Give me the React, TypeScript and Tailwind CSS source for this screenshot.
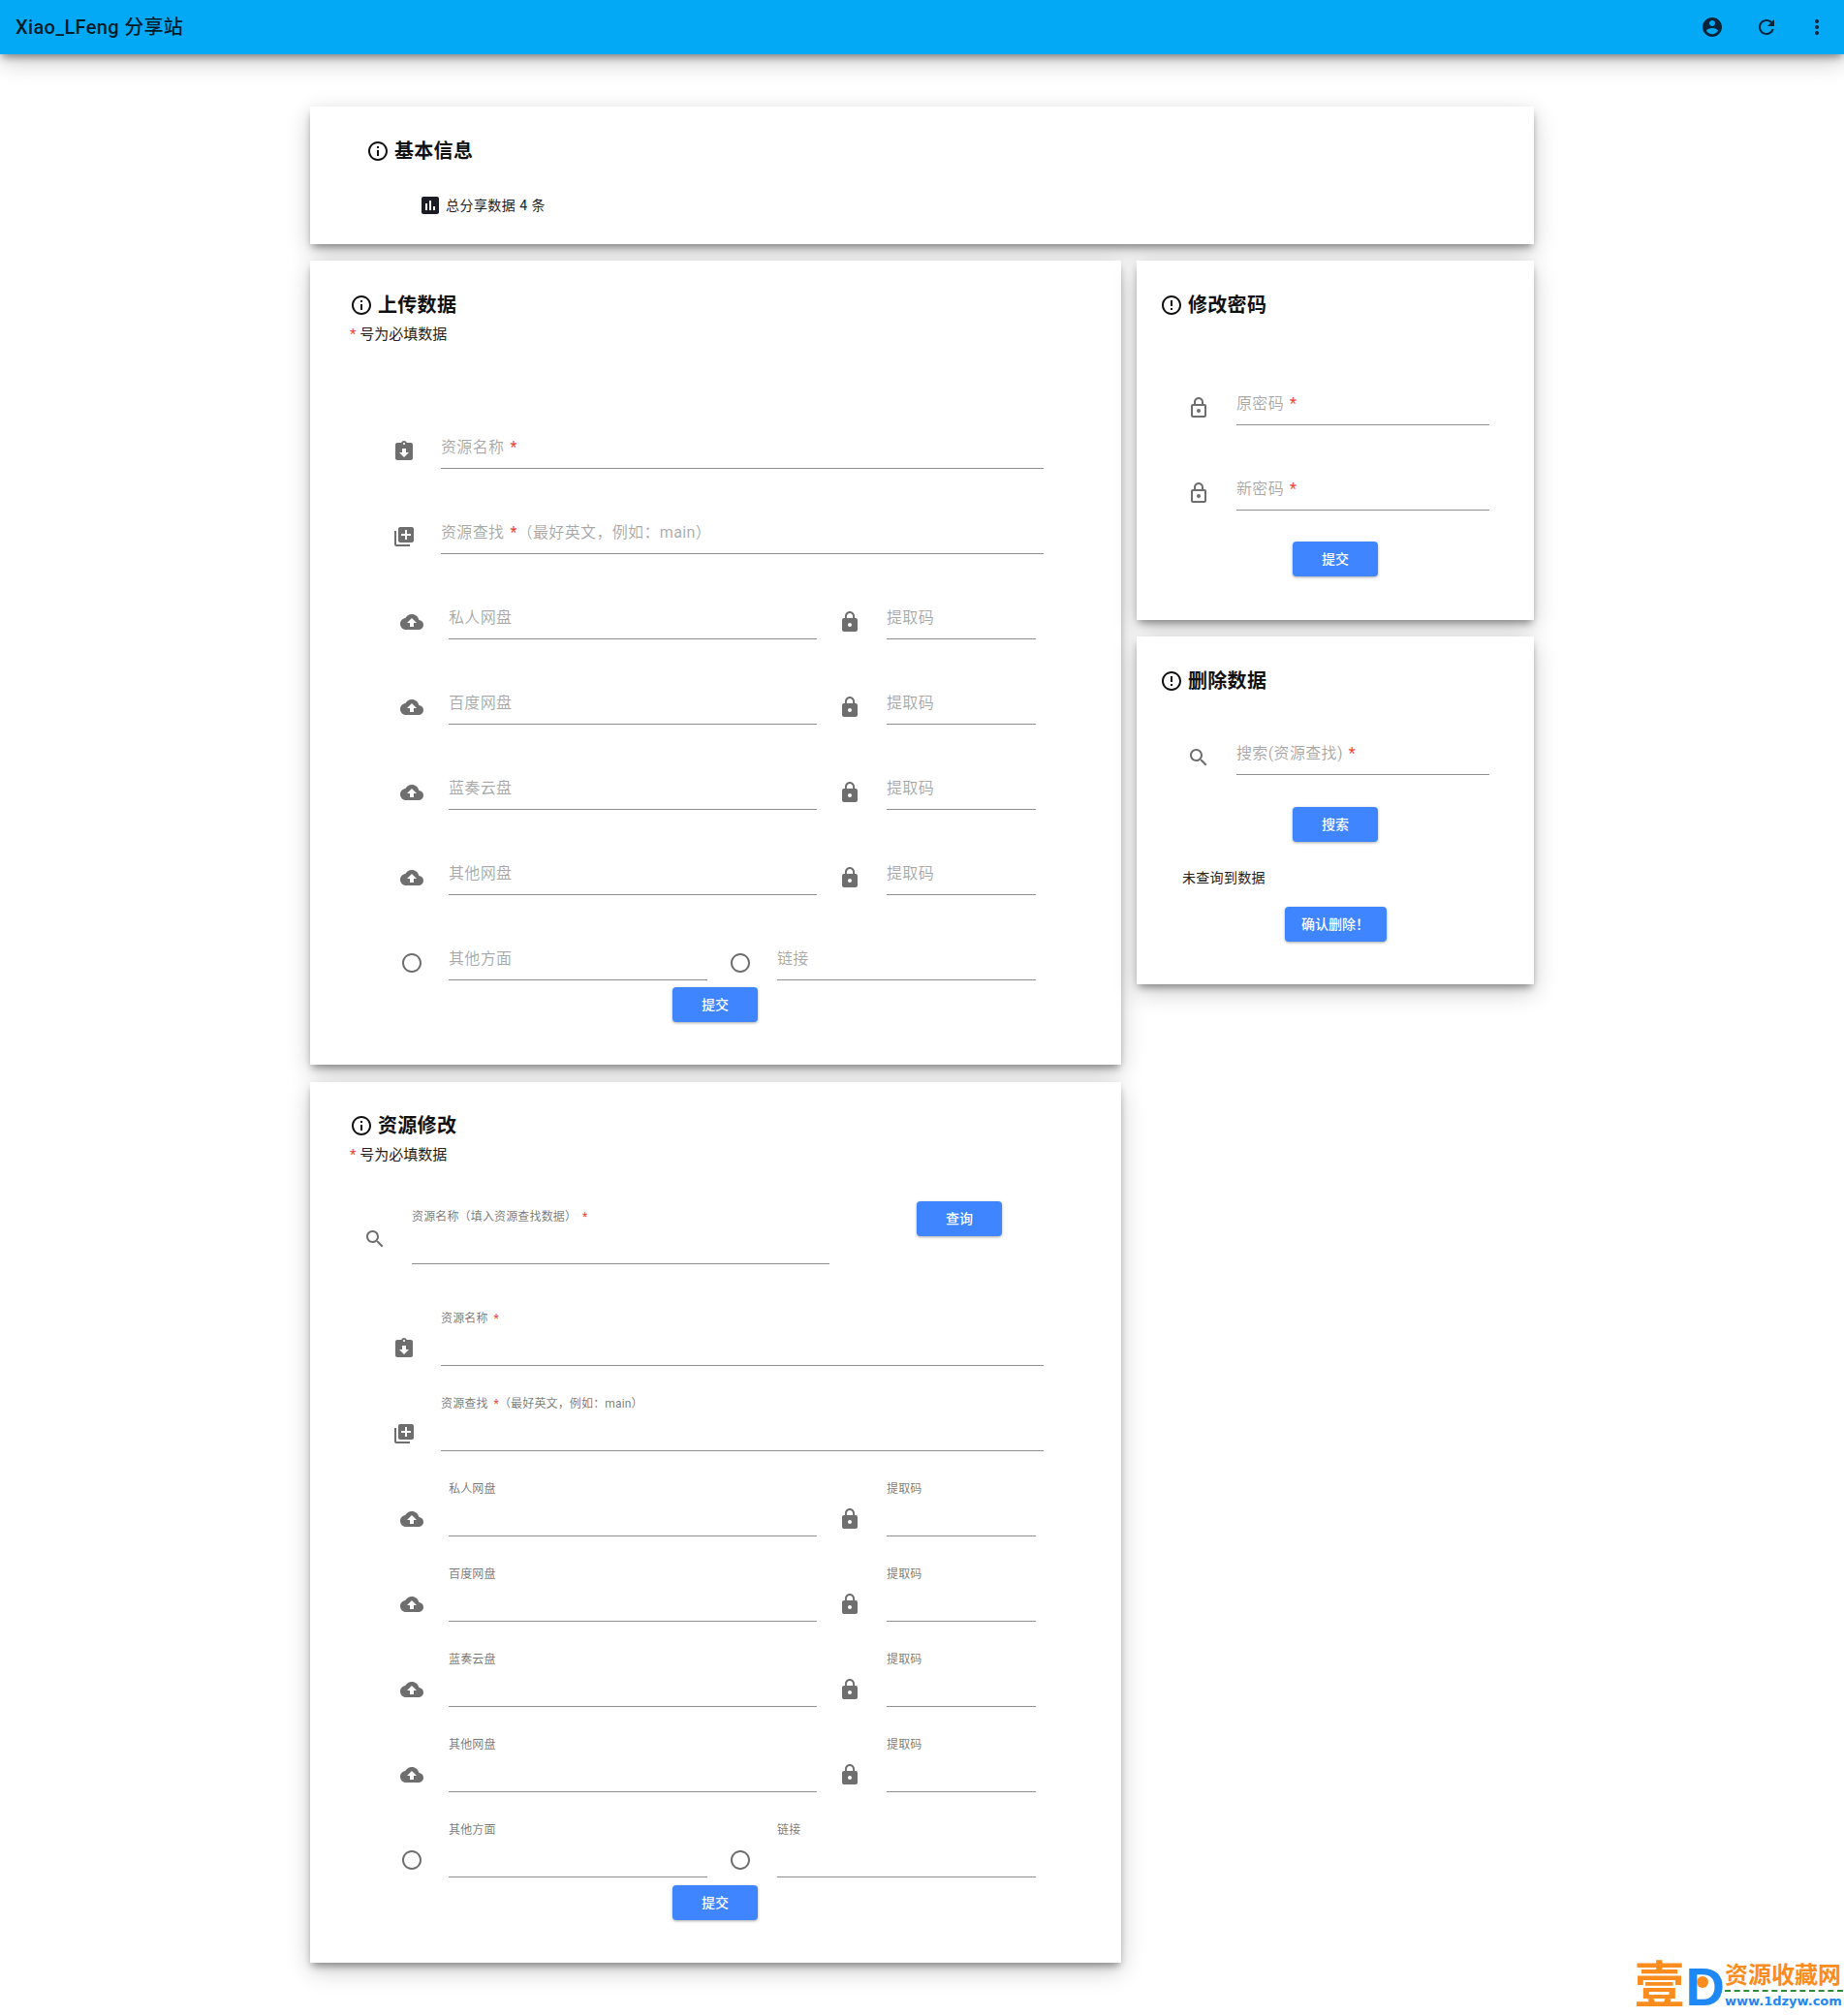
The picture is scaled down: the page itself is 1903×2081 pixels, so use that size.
import type { ReactNode } from "react";

const paths = {
    account:
        "M12 2C6.48 2 2 6.48 2 12s4.48 10 10 10 10-4.48 10-10S17.52 2 12 2zm0 3c1.66 0 3 1.34 3 3s-1.34 3-3 3-3-1.34-3-3 1.34-3 3-3zm0 14.2c-2.5 0-4.71-1.28-6-3.22.03-1.99 4-3.08 6-3.08 1.99 0 5.97 1.09 6 3.08-1.29 1.94-3.5 3.22-6 3.22z",
    refresh:
        "M17.65 6.35C16.2 4.9 14.21 4 12 4c-4.42 0-7.99 3.58-7.99 8s3.57 8 7.99 8c3.73 0 6.84-2.55 7.73-6h-2.08c-.82 2.33-3.04 4-5.65 4-3.31 0-6-2.69-6-6s2.69-6 6-6c1.66 0 3.14.69 4.22 1.78L13 11h7V4l-2.35 2.35z",
    more: "M12 8c1.1 0 2-.9 2-2s-.9-2-2-2-2 .9-2 2 .9 2 2 2zm0 2c-1.1 0-2 .9-2 2s.9 2 2 2 2-.9 2-2-.9-2-2-2zm0 6c-1.1 0-2 .9-2 2s.9 2 2 2 2-.9 2-2-.9-2-2-2z",
    info: "M11 7h2v2h-2zm0 4h2v6h-2zm1-9C6.48 2 2 6.48 2 12s4.48 10 10 10 10-4.48 10-10S17.52 2 12 2zm0 18c-4.41 0-8-3.59-8-8s3.59-8 8-8 8 3.59 8 8-3.59 8-8 8z",
    error: "M11 15h2v2h-2zm0-8h2v6h-2zm.99-5C6.47 2 2 6.48 2 12s4.47 10 9.99 10C17.52 22 22 17.52 22 12S17.52 2 11.99 2zM12 20c-4.42 0-8-3.58-8-8s3.58-8 8-8 8 3.58 8 8-3.58 8-8 8z",
    chart: "M19 3H5c-1.1 0-2 .9-2 2v14c0 1.1.9 2 2 2h14c1.1 0 2-.9 2-2V5c0-1.1-.9-2-2-2zM9 17H7v-7h2v7zm4 0h-2V7h2v10zm4 0h-2v-4h2v4z",
    clipboard:
        "M19 3h-4.18C14.4 1.84 13.3 1 12 1c-1.3 0-2.4.84-2.82 2H5c-1.1 0-2 .9-2 2v14c0 1.1.9 2 2 2h14c1.1 0 2-.9 2-2V5c0-1.1-.9-2-2-2zm-7 0c.55 0 1 .45 1 1s-.45 1-1 1-1-.45-1-1 .45-1 1-1zm0 15l-5-5h3V9h4v4h3l-5 5z",
    library:
        "M4 6H2v14c0 1.1.9 2 2 2h14v-2H4V6zm16-4H8c-1.1 0-2 .9-2 2v12c0 1.1.9 2 2 2h12c1.1 0 2-.9 2-2V4c0-1.1-.9-2-2-2zm-1 9h-4v4h-2v-4H9V9h4V5h2v4h4v2z",
    cloud: "M19.35 10.04C18.67 6.59 15.64 4 12 4 9.11 4 6.6 5.64 5.35 8.04 2.34 8.36 0 10.91 0 14c0 3.31 2.69 6 6 6h13c2.76 0 5-2.24 5-5 0-2.64-2.05-4.78-4.65-4.96zM14 13v4h-4v-4H7l5-5 5 5h-3z",
    lock: "M18 8h-1V6c0-2.76-2.24-5-5-5S7 3.24 7 6v2H6c-1.1 0-2 .9-2 2v10c0 1.1.9 2 2 2h12c1.1 0 2-.9 2-2V10c0-1.1-.9-2-2-2zm-6 9c-1.1 0-2-.9-2-2s.9-2 2-2 2 .9 2 2-.9 2-2 2zm3.1-9H8.9V6c0-1.71 1.39-3.1 3.1-3.1 1.71 0 3.1 1.39 3.1 3.1v2z",
    lockOutline:
        "M18 8h-1V6c0-2.76-2.24-5-5-5S7 3.24 7 6v2H6c-1.1 0-2 .9-2 2v10c0 1.1.9 2 2 2h12c1.1 0 2-.9 2-2V10c0-1.1-.9-2-2-2zM9 6c0-1.66 1.34-3 3-3s3 1.34 3 3v2H9V6zm9 14H6V10h12v10zm-6-3c1.1 0 2-.9 2-2s-.9-2-2-2-2 .9-2 2 .9 2 2 2z",
    search: "M15.5 14h-.79l-.28-.27C15.41 12.59 16 11.11 16 9.5 16 5.91 13.09 3 9.5 3S3 5.91 3 9.5 5.91 16 9.5 16c1.61 0 3.09-.59 4.23-1.57l.27.28v.79l5 4.99L20.49 19l-4.99-5zm-6 0C7.01 14 5 11.99 5 9.5S7.01 5 9.5 5 14 7.01 14 9.5 11.99 14 9.5 14z",
    radio: "M12 2C6.48 2 2 6.48 2 12s4.48 10 10 10 10-4.48 10-10S17.52 2 12 2zm0 18c-4.42 0-8-3.58-8-8s3.58-8 8-8 8 3.58 8 8-3.58 8-8 8z"
};

type IconName = keyof typeof paths;

function Icon({ name, className = "" }: { name: IconName; className?: string }) {
    return (
        <svg viewBox="0 0 24 24" className={`h-6 w-6 shrink-0 fill-current ${className}`}>
            <path d={paths[name]} />
        </svg>
    );
}

function FieldIcon({ name, className = "" }: { name: IconName; className?: string }) {
    return <Icon name={name} className={`mb-[6px] text-[#6e6e6e] ${className}`} />;
}

function Star() {
    return <span className="ml-[6px] text-[#f44336]">*</span>;
}

interface FieldProps {
    label: ReactNode;
    shrink?: boolean;
    className: string;
}

function Field({ label, shrink = false, className }: FieldProps) {
    return (
        <div
            className={`flex h-[58px] flex-col border-b border-[#8f8f8f] ${
                shrink
                    ? "justify-start pt-[1px] text-xs leading-4 tracking-[0.15px] text-black/55"
                    : "justify-end pb-[9px] text-base leading-6 tracking-[0.35px] text-black/35"
            } ${className}`}
        >
            <span className="whitespace-pre">{label}</span>
        </div>
    );
}

function Row({ className = "", children }: { className?: string; children: ReactNode }) {
    return <div className={`flex h-[88px] items-end ${className}`}>{children}</div>;
}

function SubmitButton({ label = "提交", className = "w-[88px]" }: { label?: string; className?: string }) {
    return (
        <button
            type="button"
            className={`h-9 rounded bg-[#3f85ff] text-sm font-medium text-white shadow-[0_1px_3px_rgba(0,0,0,0.35)] ${className}`}
        >
            {label}
        </button>
    );
}

function Card({ className = "", children }: { className?: string; children: ReactNode }) {
    return (
        <section
            className={`bg-white shadow-[0_5px_8px_-2px_rgba(0,0,0,0.4),0_8px_24px_rgba(0,0,0,0.2)] ${className}`}
        >
            {children}
        </section>
    );
}

function CardTitle({ icon, text }: { icon: IconName; text: string }) {
    return (
        <div className="flex h-8 items-center gap-[5px] text-[#111]">
            <Icon name={icon} />
            <h2 className="text-xl font-bold tracking-[0.3px]">{text}</h2>
        </div>
    );
}

function RequiredNote() {
    return (
        <p className="mt-1 text-[15px] leading-5 text-[#222]">
            <span className="text-[#f44336]">*</span> 号为必填数据
        </p>
    );
}

function ResourceForm({ shrink = false }: { shrink?: boolean }) {
    const drives = ["私人网盘", "百度网盘", "蓝奏云盘", "其他网盘"];
    return (
        <>
            <Row className="pl-[85px]">
                <FieldIcon name="clipboard" />
                <Field
                    shrink={shrink}
                    className="ml-[26px] w-[622px]"
                    label={
                        <>
                            资源名称
                            <Star />
                        </>
                    }
                />
            </Row>
            <Row className="pl-[85px]">
                <FieldIcon name="library" />
                <Field
                    shrink={shrink}
                    className="ml-[26px] w-[622px]"
                    label={
                        <>
                            资源查找
                            <Star />
                            （最好英文，例如：main）
                        </>
                    }
                />
            </Row>
            {drives.map((drive) => (
                <Row key={drive} className="pl-[93px]">
                    <FieldIcon name="cloud" />
                    <Field shrink={shrink} className="ml-[26px] w-[380px]" label={drive} />
                    <FieldIcon name="lock" className="ml-[22px]" />
                    <Field shrink={shrink} className="ml-[26px] w-[154px]" label="提取码" />
                </Row>
            ))}
            <Row className="pl-[93px]">
                <FieldIcon name="radio" />
                <Field shrink={shrink} className="ml-[26px] w-[267px]" label="其他方面" />
                <FieldIcon name="radio" className="ml-[22px]" />
                <Field shrink={shrink} className="ml-[26px] w-[267px]" label="链接" />
            </Row>
        </>
    );
}

function Watermark() {
    return (
        <div className="absolute right-[1px] bottom-[5px] flex items-end">
            <span className="text-[52px] leading-[50px] font-bold text-[#fb8c1e]">壹</span>
            <span className="relative ml-[1px] font-['Liberation_Sans',sans-serif] text-[56px] leading-[50px] font-bold text-[#1e88f5]">
                D
                <span className="absolute top-[14px] left-[11px] h-3 w-3 rounded-full bg-[#fb8c1e]" />
            </span>
            <div className="flex w-[122px] flex-col">
                <span className="text-2xl leading-[26px] font-bold whitespace-nowrap text-[#fb8c1e]">资源收藏网</span>
                <span className="mt-[2px] border-t-2 border-dashed border-[#2e8b3a]" />
                <span className="font-['DejaVu_Sans',sans-serif] text-[13px] leading-[20px] font-bold whitespace-nowrap text-[#1e88f5]">
                    www.1dzyw.com
                </span>
            </div>
        </div>
    );
}

export default function App() {
    return (
        <div className="relative min-h-[2081px] bg-white font-['Roboto','Noto_Sans_CJK_SC',sans-serif]">
            <header className="flex h-14 items-center bg-[#03a9f4] pr-4 pl-4 text-black/85 shadow-[0_5px_8px_-2px_rgba(0,0,0,0.4),0_8px_24px_rgba(0,0,0,0.2)]">
                <h1 className="text-xl font-medium tracking-[0.33px]">Xiao_LFeng 分享站</h1>
                <div className="ml-auto flex items-center gap-8 text-[#06233a]">
                    <Icon name="account" />
                    <Icon name="refresh" />
                    <Icon name="more" className="-ml-1" />
                </div>
            </header>

            <main className="mx-auto flex w-[1263px] flex-col gap-[17px] pt-[54px]">
                <Card className="h-[142px] pt-[30px] pl-[58px]">
                    <CardTitle icon="info" text="基本信息" />
                    <div className="mt-[28px] ml-[54px] flex h-6 items-center gap-1 text-sm tracking-[0.45px] text-[#222]">
                        <Icon name="chart" className="text-[#1c1c24]" />
                        总分享数据 4 条
                    </div>
                </Card>

                <div className="flex items-start gap-4">
                    <div className="flex w-[837px] flex-col gap-[18px]">
                        <Card className="h-[830px] pt-[30px] pl-[41px]">
                            <CardTitle icon="info" text="上传数据" />
                            <RequiredNote />
                            <div className="mt-[41px] -ml-[41px]">
                                <ResourceForm />
                                <div className="mt-[7px] flex justify-center pr-[1px]">
                                    <SubmitButton />
                                </div>
                            </div>
                        </Card>

                        <Card className="h-[909px] pt-[29px] pl-[41px]">
                            <CardTitle icon="info" text="资源修改" />
                            <RequiredNote />
                            <div className="mt-[39px] -ml-[41px]">
                                <div className="flex h-16 items-end pl-[55px]">
                                    <Icon name="search" className="mb-[14px] text-[#6e6e6e]" />
                                    <Field
                                        shrink
                                        className="ml-[26px] w-[431px]"
                                        label={
                                            <>
                                                资源名称（填入资源查找数据）
                                                <Star />
                                            </>
                                        }
                                    />
                                    <div className="-mt-[1px] ml-[90px] self-start">
                                        <SubmitButton label="查询" />
                                    </div>
                                </div>
                                <div className="mt-[17px]">
                                    <ResourceForm shrink />
                                </div>
                                <div className="mt-2 flex justify-center pr-[1px]">
                                    <SubmitButton />
                                </div>
                            </div>
                        </Card>
                    </div>

                    <div className="flex w-[410px] flex-col gap-[17px]">
                        <Card className="h-[371px] pt-[30px] pl-6">
                            <CardTitle icon="error" text="修改密码" />
                            <div className="mt-[20px] -ml-6 pl-[52px]">
                                <Row>
                                    <FieldIcon name="lockOutline" />
                                    <Field
                                        className="ml-[27px] w-[261px]"
                                        label={
                                            <>
                                                原密码
                                                <Star />
                                            </>
                                        }
                                    />
                                </Row>
                                <Row>
                                    <FieldIcon name="lockOutline" />
                                    <Field
                                        className="ml-[27px] w-[261px]"
                                        label={
                                            <>
                                                新密码
                                                <Star />
                                            </>
                                        }
                                    />
                                </Row>
                            </div>
                            <div className="mt-[32px] -ml-6 flex justify-center">
                                <SubmitButton />
                            </div>
                        </Card>

                        <Card className="h-[359px] pt-[30px] pl-6">
                            <CardTitle icon="error" text="删除数据" />
                            <div className="-ml-6 flex h-[81px] items-end pl-[52px]">
                                <FieldIcon name="search" />
                                <Field
                                    className="ml-[27px] w-[261px]"
                                    label={
                                        <>
                                            搜索(资源查找)
                                            <Star />
                                        </>
                                    }
                                />
                            </div>
                            <div className="mt-[33px] -ml-6 flex justify-center">
                                <SubmitButton label="搜索" />
                            </div>
                            <p className="mt-[27px] ml-[23px] text-sm leading-5 tracking-[0.3px] text-[#222]">
                                未查询到数据
                            </p>
                            <div className="mt-5 -ml-6 flex justify-center">
                                <SubmitButton label="确认删除！" className="w-[105px]" />
                            </div>
                        </Card>
                    </div>
                </div>
            </main>

            <Watermark />
        </div>
    );
}
